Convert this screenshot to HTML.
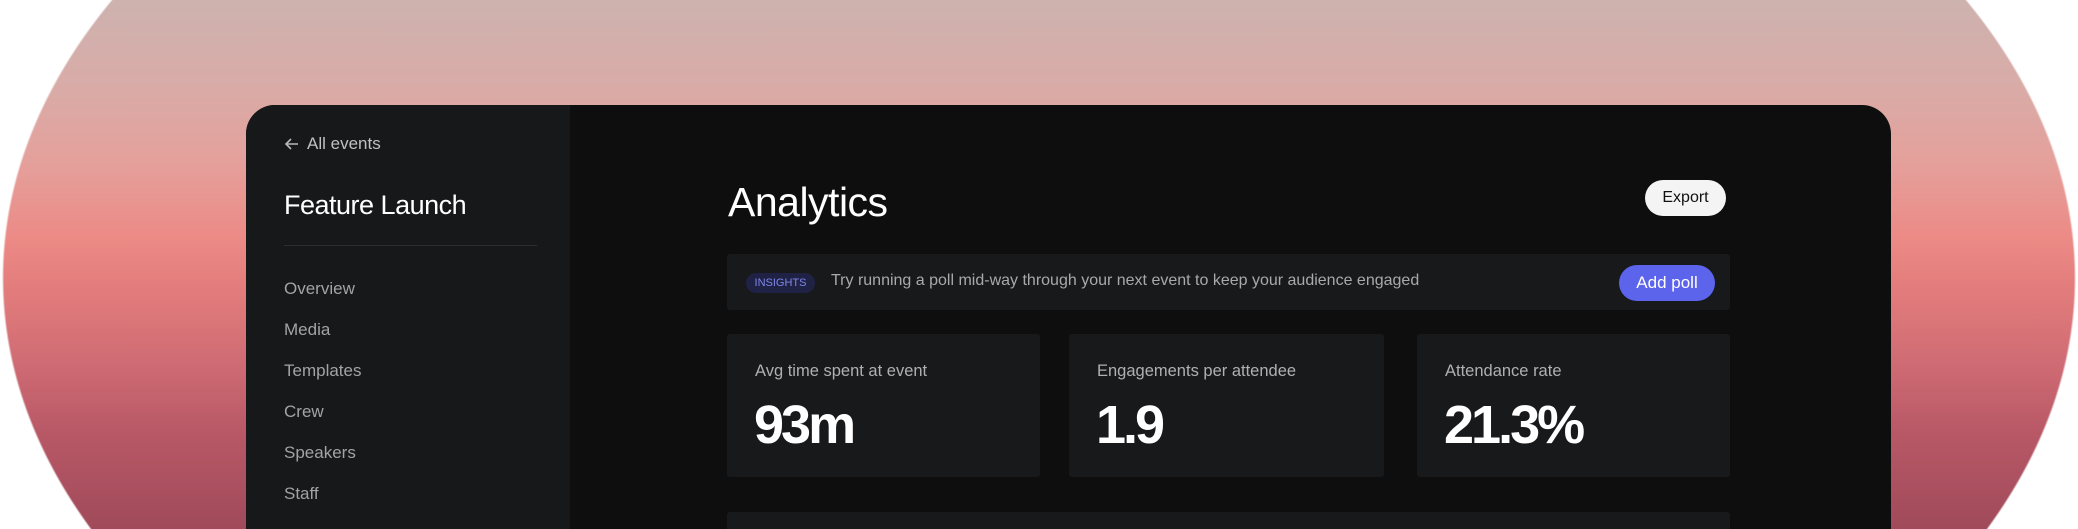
<!DOCTYPE html>
<html><head><meta charset="utf-8"><style>
*{margin:0;padding:0;box-sizing:border-box}
html,body{width:2078px;height:529px;overflow:hidden}
body{background:#fff;position:relative;font-family:"Liberation Sans",sans-serif}
.clip{position:absolute;left:0;top:0;width:2078px;height:529px;overflow:hidden}
.bg{position:absolute;left:0;top:0;width:2078px;height:529px;background:radial-gradient(ellipse 1037px 623px at 1039px 278px,transparent 99.8%,#fff 100%),linear-gradient(180deg,#cdb2ae 0%,#d8aca8 15%,#e4a19c 30%,#ec8a86 45%,#e27c7c 55%,#d06c74 68%,#b85866 82%,#a04a5a 100%)}
.win{position:absolute;left:246px;top:105px;width:1645px;height:424px;border-radius:29px 29px 0 0;background:#0e0e0f;overflow:hidden}
.side{position:absolute;left:0;top:0;width:324px;height:100%;background:#17181a}
.t{position:absolute;white-space:nowrap}
.nav{color:#a3a3a6;font-size:17px}
.card{position:absolute;background:#18191b;border-radius:3px}
.lbl{position:absolute;left:28px;top:28px;color:#b0b0b3;font-size:16.5px}
.val{position:absolute;left:27px;top:60px;color:#fff;font-size:54px;font-weight:bold;letter-spacing:-3px}
</style></head><body>
<div class="clip">
<div class="bg"></div>
<div class="win">
 <div class="side">
  <svg class="t" style="left:38px;top:31px" width="16" height="16" viewBox="0 0 16 16"><path d="M14 8H2M7 3L2 8l5 5" stroke="#b8b8bb" stroke-width="1.6" fill="none"/></svg>
  <div class="t" style="left:61px;top:29px;color:#c0c0c3;font-size:17px">All events</div>
  <div class="t" style="left:38px;top:85px;color:#fff;font-size:27px;letter-spacing:-0.5px">Feature Launch</div>
  <div class="t" style="left:38px;top:140px;width:253px;height:1px;background:#2c2d30"></div>
  <div class="t nav" style="left:38px;top:174px">Overview</div>
  <div class="t nav" style="left:38px;top:215px">Media</div>
  <div class="t nav" style="left:38px;top:256px">Templates</div>
  <div class="t nav" style="left:38px;top:297px">Crew</div>
  <div class="t nav" style="left:38px;top:338px">Speakers</div>
  <div class="t nav" style="left:38px;top:379px">Staff</div>
 </div>
 <div class="t" style="left:482px;top:74px;color:#fff;font-size:41px;letter-spacing:-0.5px">Analytics</div>
 <div class="t" style="left:1399px;top:75px;width:81px;height:36px;background:#f4f4f4;border-radius:18px;color:#111;font-size:16px;text-align:center;line-height:36px">Export</div>
 <div class="card" style="left:481px;top:149px;width:1003px;height:56px">
  <div class="t" style="left:19px;top:19px;width:69px;height:20px;background:#1f2244;border-radius:10px;color:#7e87ea;font-size:11px;text-align:center;line-height:20px">INSIGHTS</div>
  <div class="t" style="left:104px;top:18px;color:#a9a9ac;font-size:16px">Try running a poll mid-way through your next event to keep your audience engaged</div>
  <div class="t" style="left:892px;top:11px;width:96px;height:36px;background:#5c64ec;border-radius:18px;color:#fff;font-size:17px;text-align:center;line-height:36px">Add poll</div>
 </div>
 <div class="card" style="left:481px;top:229px;width:313px;height:143px"><div class="lbl">Avg time spent at event</div><div class="val">93m</div></div>
 <div class="card" style="left:823px;top:229px;width:315px;height:143px"><div class="lbl">Engagements per attendee</div><div class="val">1.9</div></div>
 <div class="card" style="left:1171px;top:229px;width:313px;height:143px"><div class="lbl">Attendance rate</div><div class="val">21.3%</div></div>
 <div class="card" style="left:481px;top:407px;width:1003px;height:17px;border-radius:3px 3px 0 0"></div>
</div>
</div>
</body></html>
